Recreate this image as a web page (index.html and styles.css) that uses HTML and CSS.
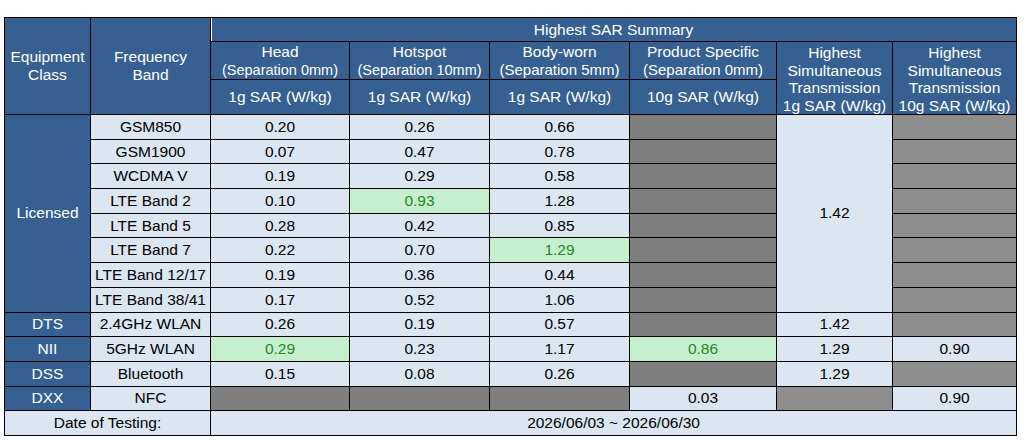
FILE: index.html
```html
<!DOCTYPE html>
<html lang="en">
<head>
<meta charset="utf-8">
<title>Highest SAR Summary</title>
<link rel="stylesheet" href="styles.css">
</head>
<body>
<div class="wrap">
<table class="sar">
  <colgroup>
    <col class="c1"><col class="c2"><col class="c3"><col class="c4"><col class="c5"><col class="c6"><col class="c7"><col class="c8">
  </colgroup>
  <thead>
    <tr class="h1">
      <th rowspan="3">Equipment<br>Class</th>
      <th rowspan="3">Frequency<br>Band</th>
      <th colspan="6" class="top">Highest SAR Summary</th>
    </tr>
    <tr class="h2">
      <th>Head<br><span class="sep">(Separation 0mm)</span></th>
      <th>Hotspot<br><span class="sep">(Separation 10mm)</span></th>
      <th>Body-worn<br><span class="sep wide">(Separation 5mm)</span></th>
      <th>Product Specific<br><span class="sep wide">(Separation 0mm)</span></th>
      <th rowspan="2" class="multi">Highest<br>Simultaneous<br>Transmission<br>1g SAR (W/kg)</th>
      <th rowspan="2" class="multi">Highest<br>Simultaneous<br>Transmission<br>10g SAR (W/kg)</th>
    </tr>
    <tr class="h3">
      <th>1g SAR (W/kg)</th>
      <th>1g SAR (W/kg)</th>
      <th>1g SAR (W/kg)</th>
      <th>10g SAR (W/kg)</th>
    </tr>
  </thead>
  <tbody>
    <tr>
      <th rowspan="8" class="cls">Licensed</th>
      <td>GSM850</td><td>0.20</td><td>0.26</td><td>0.66</td><td class="na"></td>
      <td rowspan="8">1.42</td><td class="na2"></td>
    </tr>
    <tr><td>GSM1900</td><td>0.07</td><td>0.47</td><td>0.78</td><td class="na"></td><td class="na2"></td></tr>
    <tr><td>WCDMA V</td><td>0.19</td><td>0.29</td><td>0.58</td><td class="na"></td><td class="na2"></td></tr>
    <tr><td>LTE Band 2</td><td>0.10</td><td class="hi">0.93</td><td>1.28</td><td class="na"></td><td class="na2"></td></tr>
    <tr><td>LTE Band 5</td><td>0.28</td><td>0.42</td><td>0.85</td><td class="na"></td><td class="na2"></td></tr>
    <tr><td>LTE Band 7</td><td>0.22</td><td>0.70</td><td class="hi">1.29</td><td class="na"></td><td class="na2"></td></tr>
    <tr><td>LTE Band 12/17</td><td>0.19</td><td>0.36</td><td>0.44</td><td class="na"></td><td class="na2"></td></tr>
    <tr><td>LTE Band 38/41</td><td>0.17</td><td>0.52</td><td>1.06</td><td class="na"></td><td class="na2"></td></tr>
    <tr><th class="cls">DTS</th><td>2.4GHz WLAN</td><td>0.26</td><td>0.19</td><td>0.57</td><td class="na"></td><td>1.42</td><td class="na2"></td></tr>
    <tr><th class="cls">NII</th><td>5GHz WLAN</td><td class="hi">0.29</td><td>0.23</td><td>1.17</td><td class="hi">0.86</td><td>1.29</td><td>0.90</td></tr>
    <tr><th class="cls">DSS</th><td>Bluetooth</td><td>0.15</td><td>0.08</td><td>0.26</td><td class="na"></td><td>1.29</td><td class="na2"></td></tr>
    <tr><th class="cls">DXX</th><td>NFC</td><td class="na"></td><td class="na"></td><td class="na"></td><td>0.03</td><td class="na2"></td><td>0.90</td></tr>
    <tr><td colspan="2">Date of Testing:</td><td colspan="6">2026/06/03 ~ 2026/06/30</td></tr>
  </tbody>
</table>
</div>
</body>
</html>
```

FILE: styles.css
```css
html, body {
  margin: 0;
  padding: 0;
  background: #ffffff;
}

.wrap {
  padding: 17px 0 0 4px;
}

.sar {
  border-collapse: collapse;
  table-layout: fixed;
  width: 1012px;
  font-family: "Liberation Sans", Arial, sans-serif;
  font-size: 15.5px;
  color: #000000;
}

.c1 { width: 86px; }
.c2 { width: 120px; }
.c3 { width: 139px; }
.c4 { width: 140px; }
.c5 { width: 140px; }
.c6 { width: 147px; }
.c7 { width: 116px; }
.c8 { width: 124px; }

.sar th,
.sar td {
  border: 1px solid #000000;
  padding: 0 1px;
  text-align: center;
  vertical-align: middle;
  font-weight: normal;
  white-space: nowrap;
  overflow: hidden;
}

.sar thead th,
.sar th.cls {
  background: #366092;
  color: #ffffff;
}

.sar thead th {
  line-height: 18px;
}

.sar thead th.top {
  box-shadow: inset 1px 0 0 #ffffff;
}

.sar thead th.multi {
  line-height: 17.5px;
  padding-top: 2px;
}

.h1 { height: 24px; }
.h2 { height: 38px; }
.h3 { height: 35px; }

.sep {
  font-size: 14.5px;
}

.sep.wide {
  font-size: 15px;
}

.sar tbody tr {
  height: 24.7px;
}

.sar tbody td {
  background: #dce6f1;
  line-height: 18px;
}

.sar tbody td.na {
  background: #7f7f7f;
}

.sar tbody td.na2 {
  background: #8e8e8e;
}

.sar tbody td.hi {
  background: #c6efce;
  color: #1f8a26;
}
```
